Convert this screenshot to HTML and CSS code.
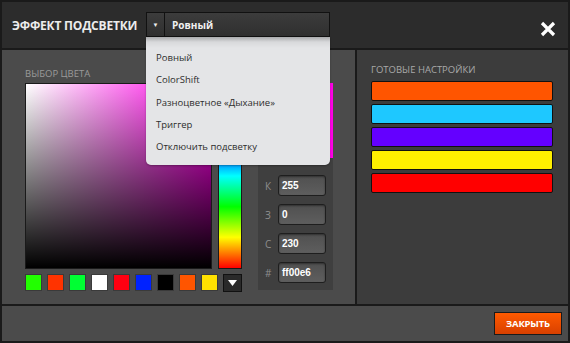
FILE: index.html
```html
<!DOCTYPE html>
<html lang="ru">
<head>
<meta charset="utf-8">
<link rel="stylesheet" href="styles.css">
</head>
<body>
<div class="dialog">
  <header class="head">
    <h1 class="title">ЭФФЕКТ ПОДСВЕТКИ</h1>
    <div class="select">
      <span class="select-arrow">▼</span>
      <span class="select-value">Ровный</span>
      <ul class="menu">
        <li>Ровный</li>
        <li>ColorShift</li>
        <li>Разноцветное «Дыхание»</li>
        <li>Триггер</li>
        <li>Отключить подсветку</li>
      </ul>
    </div>
    <button class="close" aria-label="close">
      <svg width="16" height="16" viewBox="0 0 16 16"><path d="M2 2 L14 14 M14 2 L2 14" stroke="#fff" stroke-width="3.2" stroke-linecap="butt"/></svg>
    </button>
  </header>
  <main class="body">
    <section class="left">
      <div class="label">ВЫБОР ЦВЕТА</div>
      <div class="picker-row">
        <div class="picker-col">
          <div class="picker-main">
            <div class="sv"></div>
            <div class="hue"></div>
          </div>
          <div class="swatches">
            <span class="sw" style="background:#22ff00"></span>
            <span class="sw" style="background:#ff3300"></span>
            <span class="sw" style="background:#00ff33"></span>
            <span class="sw" style="background:#ffffff"></span>
            <span class="sw" style="background:#ff0011"></span>
            <span class="sw" style="background:#0022ff"></span>
            <span class="sw" style="background:#000000"></span>
            <span class="sw" style="background:#ff5500"></span>
            <span class="sw" style="background:#ffe100"></span>
            <span class="sw more"><svg width="9" height="6" viewBox="0 0 9 6"><path d="M0 0 H9 L4.5 6 Z" fill="#fff"/></svg></span>
          </div>
        </div>
        <div class="values">
          <div class="preview"></div>
          <div class="fields">
            <div class="field"><span class="fl">К</span><span class="inp">255</span></div>
            <div class="field"><span class="fl">З</span><span class="inp">0</span></div>
            <div class="field"><span class="fl">С</span><span class="inp">230</span></div>
            <div class="field"><span class="fl">#</span><span class="inp">ff00e6</span></div>
          </div>
        </div>
      </div>
    </section>
    <section class="right">
      <div class="label">ГОТОВЫЕ НАСТРОЙКИ</div>
      <div class="presets">
        <span class="preset" style="background:#ff5500"></span>
        <span class="preset" style="background:#1ec8ff"></span>
        <span class="preset" style="background:#6400ff"></span>
        <span class="preset" style="background:#fff000"></span>
        <span class="preset" style="background:#ff0000"></span>
      </div>
    </section>
  </main>
  <footer class="foot">
    <button class="btn">ЗАКРЫТЬ</button>
  </footer>
</div>
</body>
</html>
```

FILE: styles.css
```css
* { box-sizing: border-box; margin: 0; padding: 0; }
html, body { width: 570px; height: 343px; overflow: hidden; }
body { font-family: "Open Sans", "Noto Sans", sans-serif; background: #1a1a1a; }

.dialog {
  width: 570px; height: 343px;
  border: 2px solid #1a1a1a;
  display: flex; flex-direction: column;
  background: #4b4b4b;
}

.head {
  height: 48px;
  background: #2c2c2c;
  border-bottom: 2px solid #1a1a1a;
  display: flex; align-items: flex-start;
  padding: 10px 12px 0 10px;
  position: relative;
}
.title {
  font-size: 12px; font-weight: 700; color: #ececec;
  letter-spacing: -0.2px;
  margin-top: 5px;
  width: 134px;
}
.select {
  position: relative;
  width: 184px; height: 25px;
  border: 1px solid #111;
  background: linear-gradient(#3c3c3c, #2f2f2f);
  display: flex; align-items: center;
}
.select-arrow {
  width: 18px; height: 100%;
  border-right: 1px solid #111;
  color: #eee; font-size: 6px;
  display: flex; align-items: center; justify-content: center;
}
.select-value {
  padding-left: 7px;
  font-size: 10px; font-weight: 700; color: #f0f0f0;
}
.menu {
  position: absolute; left: -1px; top: 24px;
  width: 184px; height: 128px;
  list-style: none;
  background: linear-gradient(#a9aaac 0, #d8d9db 5px, #e4e5e7 11px);
  border-radius: 0 0 5px 5px;
  padding: 14px 0 0 10px;
  z-index: 5;
  box-shadow: 0 1px 2px rgba(0,0,0,.3);
}
.menu li {
  font-size: 9.5px; color: #2d2d2d;
  height: 22.3px; line-height: 14px;
}
.close {
  margin-left: auto; margin-top: 9px; margin-right: 0;
  background: none; border: 0;
  width: 16px; height: 16px;
}

.body { display: flex; height: 254px; }
.left {
  width: 355px;
  background: #4b4b4b;
  border-right: 2px solid #1a1a1a;
  padding: 17px 0 0 23px;
}
.right {
  flex: 1;
  background: #3c3c3c;
  padding: 13px 0 0 14px;
}
.label {
  font-size: 9.5px; color: #9a9a9a; height: 14px; line-height: 14px;
}
.right .label { color: #a9a9a9; }

.picker-row { display: flex; margin-top: 2px; }
.picker-col { display: flex; flex-direction: column; }
.picker-main { display: flex; gap: 6px; }
.sv {
  width: 187px; height: 186px;
  border: 1px solid #1a1a1a;
  background:
    linear-gradient(to top, #000, rgba(0,0,0,0)),
    linear-gradient(to right, #fff, #ff00e6);
}
.hue {
  width: 24px; height: 186px;
  border: 1px solid #1a1a1a;
  background: linear-gradient(to top, #ff0000 0%, #ffff00 16.7%, #00ff00 33.3%, #00ffff 50%, #0000ff 66.7%, #ff00ff 83.3%, #ff0000 100%);
}
.swatches { display: flex; gap: 5px; margin-top: 5px; }
.sw {
  width: 17px; height: 17px;
  border: 1px solid #3a3a3a;
}
.sw.more {
  width: 19px; height: 18px;
  background: #2a2a2a;
  border: 1px solid #111;
  display: flex; align-items: center; justify-content: center;
}

.values {
  margin-left: 16px;
  width: 75px; height: 207px;
  background: #3f3f3f;
  display: flex; flex-direction: column;
}
.preview { height: 75px; background: #ff00e6; }
.fields { padding: 17px 0 0 7px; display: flex; flex-direction: column; gap: 8px; }
.field { display: flex; align-items: center; height: 21px; }
.fl { width: 13px; font-size: 10px; color: #8e8e8e; }
.inp {
  width: 48px; height: 21px;
  border: 1px solid #1e1e1e;
  border-radius: 3px;
  background: linear-gradient(#505050, #5e5e5e);
  box-shadow: inset 0 1px 2px rgba(0,0,0,.4);
  font-family: "Liberation Sans", Arial, sans-serif;
  font-size: 10px; color: #fff; font-weight: 700;
  padding-left: 3px; line-height: 19px;
}

.presets { display: flex; flex-direction: column; gap: 3px; margin-top: 4px; }
.preset {
  width: 182px; height: 20px;
  border: 1px solid #111;
  border-radius: 2px;
}

.foot {
  flex: 1;
  border-top: 2px solid #1a1a1a;
  background: #4b4b4b;
  display: flex; justify-content: flex-end; align-items: flex-start;
  padding: 6px 6px 0 0;
}
.btn {
  width: 68px; height: 23px;
  border: 1px solid #1a1a1a;
  background: linear-gradient(#ff5a00, #d84000);
  color: #fff; font-family: "Open Sans", sans-serif;
  font-size: 9.5px; font-weight: 700;
  letter-spacing: -0.2px;
}
```
